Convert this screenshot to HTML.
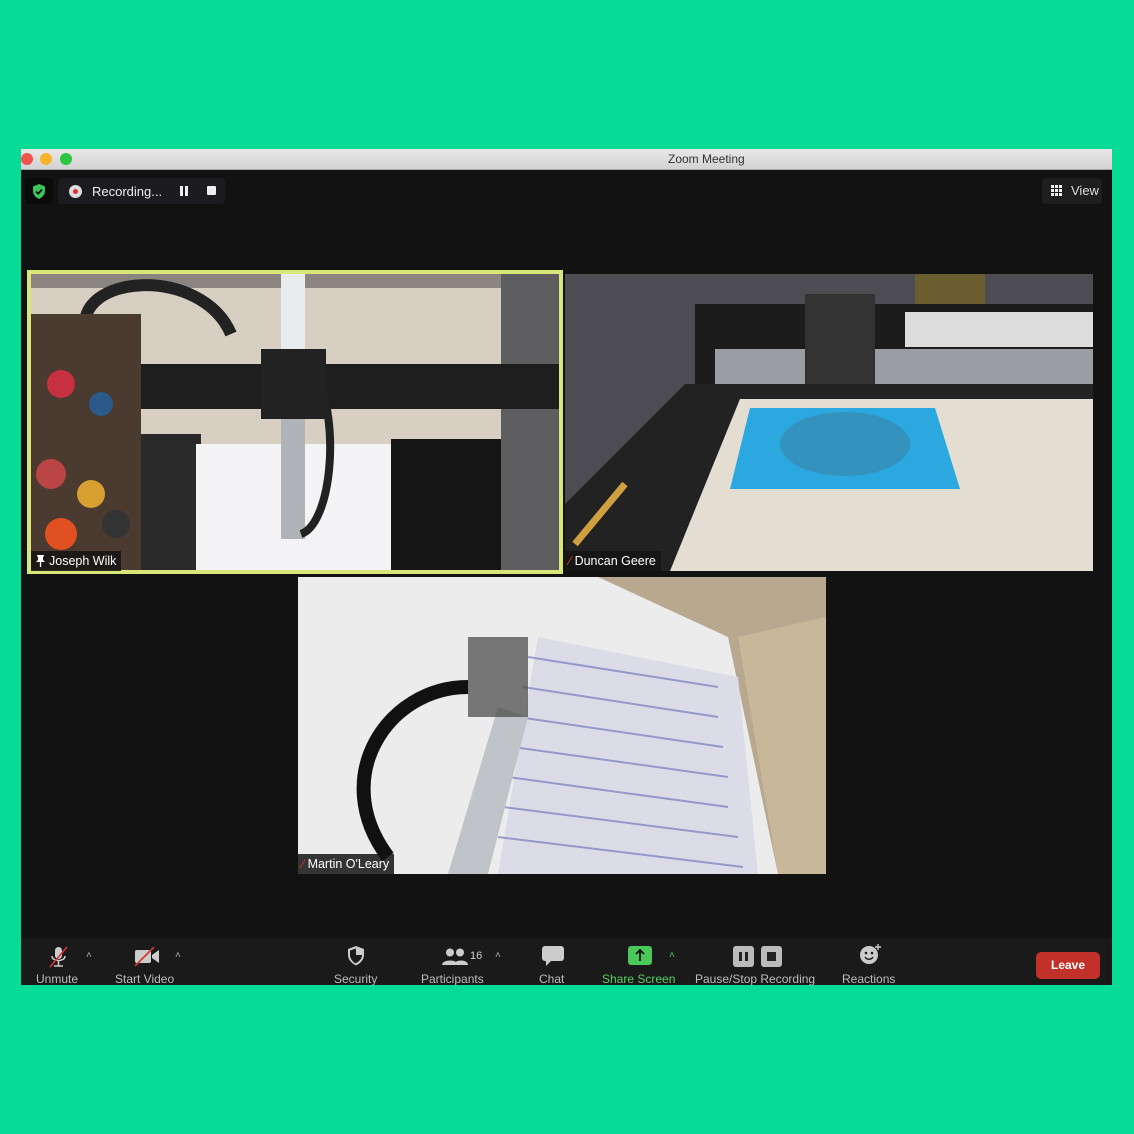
<!DOCTYPE html>
<html><head><meta charset="utf-8"><style>
*{margin:0;padding:0;box-sizing:border-box}
body{width:1134px;height:1134px;background:#06dc96;position:relative;overflow:hidden;font-family:"Liberation Sans",sans-serif}
.win{position:absolute;left:21px;top:149px;width:1091px;height:836px;background:#121212}
.title{position:absolute;left:0;top:0;width:100%;height:21px;background:linear-gradient(#e8e8e8,#d2d2d2);border-bottom:1px solid #aaa;font-size:12px;line-height:21px;color:#333}
.dot{position:absolute;top:4px;width:12px;height:12px;border-radius:50%}
.abs{position:absolute}
.lbl{position:absolute;background:rgba(20,20,20,.85);color:#fff;font-size:12.5px;height:20px;line-height:20px;padding:0 5px 0 4px}
.tb{position:absolute;left:0;top:789px;width:100%;height:47px;background:#1a1a1a}
.tt{position:absolute;top:34px;font-size:12px;color:#bdbdbd;white-space:nowrap}
.car{position:absolute;top:12px;color:#aaa;font-size:10px}
</style></head><body>
<div class="win">
<div class="title"><span style="position:absolute;left:647px">Zoom Meeting</span>
<div class="dot" style="left:0;background:#f0524c"></div>
<div class="dot" style="left:19px;background:#f5b42a"></div>
<div class="dot" style="left:39px;background:#2bc540"></div>
</div>
<div class="abs" style="left:4px;top:29px;width:28px;height:26px;background:#0b0b0b;border-radius:4px"></div>
<svg class="abs" style="left:11px;top:35px" width="14" height="15" viewBox="0 0 14 15"><path d="M7 0L13 2.5V7C13 11 10 13.5 7 15C4 13.5 1 11 1 7V2.5Z" fill="#3cc65a"/><path d="M4 7.5L6.2 9.7L10 5.5" stroke="#111" stroke-width="1.8" fill="none"/></svg>
<div class="abs" style="left:37px;top:29px;width:167px;height:26px;background:#1c1c20;border-radius:4px"></div>
<div class="abs" style="left:48px;top:36px;width:13px;height:13px;border-radius:50%;background:#ddd"></div>
<div class="abs" style="left:52px;top:40px;width:5px;height:5px;border-radius:50%;background:#e03030"></div>
<div class="abs" style="left:71px;top:35px;color:#eee;font-size:13px">Recording...</div>
<div class="abs" style="left:159px;top:37px;width:3px;height:10px;background:#eee"></div>
<div class="abs" style="left:164px;top:37px;width:3px;height:10px;background:#eee"></div>
<div class="abs" style="left:186px;top:37px;width:9px;height:9px;background:#eee;border-radius:1px"></div>
<div class="abs" style="left:1021px;top:29px;width:60px;height:26px;background:#1e1e1e;border-radius:4px;color:#ddd;font-size:13px;line-height:26px;padding-left:29px">View</div>
<svg class="abs" style="left:1030px;top:36px" width="11" height="11"><g fill="#eee"><rect x="0" y="0" width="3" height="3"/><rect x="4" y="0" width="3" height="3"/><rect x="8" y="0" width="3" height="3"/><rect x="0" y="4" width="3" height="3"/><rect x="4" y="4" width="3" height="3"/><rect x="8" y="4" width="3" height="3"/><rect x="0" y="8" width="3" height="3"/><rect x="4" y="8" width="3" height="3"/><rect x="8" y="8" width="3" height="3"/></g></svg>

<!-- tile 1 -->
<div class="abs" style="left:6px;top:121px;width:536px;height:304px;background:#d8e778"></div>
<svg class="abs" style="left:10px;top:125px" width="528" height="296" viewBox="0 0 528 296">
<rect width="528" height="296" fill="#d6cfc2"/>
<rect x="0" y="0" width="528" height="14" fill="#8a8580"/>
<rect x="250" y="0" width="24" height="296" fill="#e8ecef"/>
<rect x="470" y="0" width="58" height="296" fill="#5e5e60"/>
<rect x="70" y="90" width="460" height="45" fill="#1e1e1e"/>
<rect x="230" y="75" width="65" height="70" fill="#222"/>
<path d="M55 60C40 0 170 -10 200 60" stroke="#222" stroke-width="12" fill="none"/>
<rect x="0" y="40" width="110" height="256" fill="#4a3a30"/>
<circle cx="30" cy="110" r="14" fill="#c83040"/><circle cx="70" cy="130" r="12" fill="#2b5a8a"/><circle cx="20" cy="200" r="15" fill="#b44"/><circle cx="60" cy="220" r="14" fill="#d8a030"/><circle cx="30" cy="260" r="16" fill="#e05020"/><circle cx="85" cy="250" r="14" fill="#333"/>
<rect x="110" y="160" width="60" height="136" fill="#2a2a2a"/>
<rect x="165" y="170" width="200" height="126" fill="#f4f4f6"/>
<rect x="360" y="165" width="110" height="131" fill="#161616"/>
<rect x="250" y="145" width="24" height="120" fill="#b0b4b8"/>
<path d="M285 100C310 150 300 250 270 260" stroke="#222" stroke-width="8" fill="none"/>
</svg>
<div class="lbl" style="left:10px;top:402px;padding-left:18px"><svg class="abs" style="left:5px;top:4px" width="9" height="12"><path d="M1 0H8V1.5H7V5L9 7H0L2 5V1.5H1Z" fill="#fff"/><path d="M4.5 7V12" stroke="#fff" stroke-width="1.3"/></svg>Joseph Wilk</div>

<!-- tile 2 -->
<svg class="abs" style="left:544px;top:125px" width="528" height="297" viewBox="0 0 528 297">
<rect width="528" height="297" fill="#4c4c52"/>
<rect x="350" y="0" width="70" height="35" fill="#6a5e30"/>
<rect x="130" y="30" width="398" height="90" fill="#1c1c1c"/>
<rect x="340" y="38" width="188" height="35" fill="#ddd"/>
<rect x="150" y="75" width="378" height="35" fill="#9a9ea2"/>
<rect x="240" y="20" width="70" height="100" fill="#333"/>
<path d="M0 230L120 110H528V297H0Z" fill="#222"/>
<path d="M105 297L175 125H528V297Z" fill="#e3ddd2"/>
<path d="M185 134H370L395 215H165Z" fill="#2aa8df"/>
<ellipse cx="280" cy="170" rx="65" ry="32" fill="#3a86a8" opacity=".6"/>
<path d="M30 210L140 140" stroke="#222" stroke-width="6"/>
<path d="M10 270L60 210" stroke="#d0a040" stroke-width="7"/>
</svg>
<div class="lbl" style="left:544px;top:402px"><span style="color:#e03a2a">&#x2215;</span> Duncan Geere</div>

<!-- tile 3 -->
<svg class="abs" style="left:277px;top:428px" width="528" height="297" viewBox="0 0 528 297">
<rect width="528" height="297" fill="#b8a890"/>
<path d="M0 0H300L430 60L480 297H0Z" fill="#ececec"/>
<path d="M240 60L440 100L460 297H200Z" fill="#dcdce8"/>
<g stroke="#6a6ab8" stroke-width="2" opacity=".6">
<path d="M230 80L420 110"/><path d="M225 110L420 140"/><path d="M220 140L425 170"/><path d="M215 170L430 200"/><path d="M210 200L430 230"/><path d="M205 230L440 260"/><path d="M200 260L445 290"/></g>
<path d="M480 297L440 60L528 40V297Z" fill="#c9b79a"/>
<path d="M90 280C30 200 90 110 170 110" stroke="#111" stroke-width="14" fill="none"/>
<path d="M150 297L200 130L230 140L190 297Z" fill="#c0c4c8"/>
<rect x="170" y="60" width="60" height="80" fill="#444" opacity=".7"/>
</svg>
<div class="lbl" style="left:277px;top:705px"><span style="color:#e03a2a">&#x2215;</span> Martin O'Leary</div>

<!-- toolbar -->
<div class="tb">
<svg class="abs" style="left:27px;top:8px" width="20" height="22"><rect x="7" y="1" width="7" height="12" rx="3.5" fill="#ccc"/><path d="M4 10C4 16 17 16 17 10M10.5 15V20M6 20H15" stroke="#ccc" stroke-width="1.6" fill="none"/><path d="M2 21L19 1" stroke="#d33" stroke-width="1.6"/></svg>
<div class="car" style="left:65px">&#x2C4;</div>
<div class="tt" style="left:15px">Unmute</div>
<svg class="abs" style="left:113px;top:9px" width="26" height="20"><rect x="1" y="3" width="16" height="13" rx="2" fill="#ccc"/><path d="M18 8L25 3V16L18 11Z" fill="#ccc"/><path d="M1 19L20 0" stroke="#d33" stroke-width="1.6"/></svg>
<div class="car" style="left:154px">&#x2C4;</div>
<div class="tt" style="left:94px">Start Video</div>
<svg class="abs" style="left:326px;top:8px" width="18" height="20" viewBox="0 0 18 20"><path d="M9 0L17 3V9C17 14 13 17.5 9 19.5C5 17.5 1 14 1 9V3Z" fill="#ccc"/><path d="M9 2.5V17.5C6 16 3 13 3 9V4.5L9 2.5ZM9 9H15C15 12 13 15 9 17Z" fill="#1a1a1a"/></svg>
<div class="tt" style="left:313px">Security</div>
<svg class="abs" style="left:421px;top:10px" width="26" height="18"><circle cx="8" cy="4.5" r="4" fill="#ccc"/><path d="M0 17C0 11 16 11 16 17Z" fill="#ccc"/><circle cx="18" cy="4.5" r="4" fill="#ccc"/><path d="M12 17C12 11 26 11 26 17Z" fill="#ccc"/></svg>
<div class="abs" style="left:449px;top:12px;font-size:11px;color:#ccc">16</div>
<div class="car" style="left:474px">&#x2C4;</div>
<div class="tt" style="left:400px">Participants</div>
<svg class="abs" style="left:521px;top:8px" width="22" height="21"><rect x="0" y="0" width="22" height="15" rx="3" fill="#ccc"/><path d="M4 14L4 20L10 14Z" fill="#ccc"/></svg>
<div class="tt" style="left:518px">Chat</div>
<div class="abs" style="left:607px;top:8px;width:24px;height:19px;background:#4ac85a;border-radius:3px"></div>
<svg class="abs" style="left:613px;top:11px" width="12" height="13"><path d="M6 1V12M2 5L6 1L10 5" stroke="#111" stroke-width="1.8" fill="none"/></svg>
<div class="car" style="left:648px;color:#5c5">&#x2C4;</div>
<div class="tt" style="left:581px;color:#57d060">Share Screen</div>
<div class="abs" style="left:712px;top:8px;width:21px;height:21px;background:#bbb;border-radius:3px"></div>
<div class="abs" style="left:718px;top:14px;width:3px;height:9px;background:#222"></div><div class="abs" style="left:724px;top:14px;width:3px;height:9px;background:#222"></div>
<div class="abs" style="left:740px;top:8px;width:21px;height:21px;background:#bbb;border-radius:3px"></div>
<div class="abs" style="left:746px;top:14px;width:9px;height:9px;background:#222"></div>
<div class="tt" style="left:674px">Pause/Stop Recording</div>
<svg class="abs" style="left:838px;top:5px" width="24" height="22"><circle cx="10" cy="12" r="9" fill="#ccc"/><circle cx="7" cy="10" r="1.3" fill="#1a1a1a"/><circle cx="13" cy="10" r="1.3" fill="#1a1a1a"/><path d="M6 14C8 17 12 17 14 14" stroke="#1a1a1a" stroke-width="1.5" fill="none"/><path d="M19 1V7M16 4H22" stroke="#ccc" stroke-width="1.4"/></svg>
<div class="tt" style="left:821px">Reactions</div>
<div class="abs" style="left:1015px;top:14px;width:64px;height:27px;background:#c2302a;border-radius:5px;color:#fff;font-weight:bold;font-size:12px;text-align:center;line-height:27px">Leave</div>
</div>
</div>
</body></html>
